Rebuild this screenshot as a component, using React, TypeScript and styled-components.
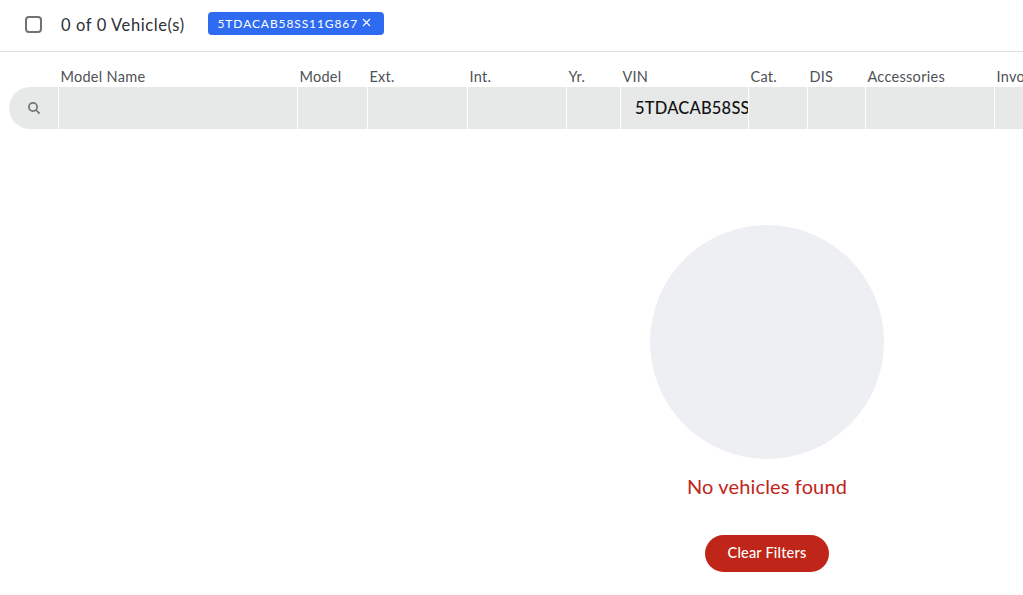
import React from "react";
import styled, { createGlobalStyle } from "styled-components";

const Global = createGlobalStyle`
  html, body { margin: 0; padding: 0; background: #fff; overflow: hidden; }
  body { font-family: Lato, "Open Sans", sans-serif; }
`;

const Page = styled.div`
  width: 1023px;
  height: 595px;
  overflow: hidden;
  position: relative;
`;

const TopBar = styled.div`
  height: 52px;
  box-sizing: border-box;
  border-bottom: 1px solid #dcdddd;
  display: flex;
  align-items: center;
  padding-left: 25px;
  padding-bottom: 1px;
`;

const Check = styled.span`
  width: 13px;
  height: 13px;
  border: 2px solid #6f7277;
  border-radius: 4px;
  display: block;
  flex: none;
  margin-bottom: 1px;
`;

const Count = styled.span`
  margin-left: 19px;
  font-size: 16.5px;
  letter-spacing: 0.6px;
  color: #2c2f34;
  width: 147px;
  flex: none;
  white-space: nowrap;
`;

const Chip = styled.span`
  height: 23px;
  width: 176px;
  margin-bottom: 3px;
  box-sizing: border-box;
  padding-left: 9.5px;
  background: #2f6bf0;
  border-radius: 4px;
  color: #fff;
  font-size: 12px;
  letter-spacing: 0.9px;
  display: flex;
  align-items: center;
  gap: 3.5px;
  white-space: nowrap;
`;

const ChipClose = styled.svg`
  margin-bottom: 2px;
`;

const Wide = styled.div`
  width: 1534px;
`;

const HeadRow = styled.div`
  display: flex;
  height: 35px;
  align-items: flex-end;
  box-sizing: border-box;
  padding: 0 0 1px 9px;
  gap: 1px;
`;

const HeadCell = styled.div<{ $w: number }>`
  width: ${(p) => p.$w}px;
  flex: none;
  box-sizing: border-box;
  padding-left: 1.4px;
  font-size: 14.5px;
  letter-spacing: 0.3px;
  line-height: 20px;
  height: 19px;
  color: #4e5156;
  white-space: nowrap;
  overflow: hidden;
`;

const FilterRow = styled.div`
  display: flex;
  height: 42px;
  margin-left: 9px;
  gap: 1px;
`;

const FilterCell = styled.div<{ $w: number; $first?: boolean }>`
  width: ${(p) => p.$w}px;
  flex: none;
  box-sizing: border-box;
  background: #e7e8e8;
  display: flex;
  align-items: center;
  overflow: hidden;
  ${(p) => (p.$first ? "border-radius: 21px 0 0 21px; justify-content: center; padding-left: 1px;" : "")}
`;

const VinInput = styled.input`
  width: 100%;
  height: 100%;
  box-sizing: border-box;
  border: none;
  outline: none;
  background: transparent;
  padding: 0 0 0 14px;
  font-family: inherit;
  font-size: 16.5px;
  letter-spacing: 0.2px;
  font-weight: 500;
  color: #111;
`;

const Empty = styled.div`
  display: flex;
  flex-direction: column;
  align-items: center;
  padding-top: 96px;
`;

const Circle = styled.div`
  width: 234px;
  height: 234px;
  border-radius: 50%;
  background: #eeeff2;
`;

const Message = styled.div`
  margin-top: 15px;
  font-size: 20px;
  letter-spacing: 0.15px;
  line-height: 24px;
  color: #c0251b;
`;

const ClearButton = styled.button`
  margin-top: 37px;
  width: 124px;
  height: 37px;
  border: none;
  border-radius: 19px;
  background: #bf2518;
  color: #fff;
  font-family: inherit;
  font-size: 14.5px;
  letter-spacing: 0.2px;
  font-weight: 500;
  padding: 0 0 2px;
`;

const cols: [string, number][] = [
  ["Model Name", 238],
  ["Model", 69],
  ["Ext.", 99],
  ["Int.", 98],
  ["Yr.", 53],
  ["VIN", 127],
  ["Cat.", 58],
  ["DIS", 57],
  ["Accessories", 128],
  ["Invoice", 120],
];

export default function App() {
  return (
    <Page>
      <Global />
      <TopBar>
        <Check />
        <Count>0 of 0 Vehicle(s)</Count>
        <Chip>
          5TDACAB58SS11G867
          <ChipClose width="9" height="9" viewBox="0 0 9 9" fill="none" stroke="#fff" strokeWidth="1.1">
            <path d="M1 1l7 7M8 1l-7 7" />
          </ChipClose>
        </Chip>
      </TopBar>
      <Wide>
        <HeadRow>
          <HeadCell $w={49} />
          {cols.map(([label, w]) => (
            <HeadCell key={label} $w={w}>{label}</HeadCell>
          ))}
        </HeadRow>
        <FilterRow>
          <FilterCell $w={49} $first>
            <svg width="14" height="14" viewBox="0 0 14 14" fill="none" stroke="#6f7277" strokeWidth="1.7">
              <circle cx="6" cy="6" r="4.1" />
              <path d="M9 9l3.6 3.6" />
            </svg>
          </FilterCell>
          {cols.map(([label, w]) => (
            <FilterCell key={label} $w={w}>
              {label === "VIN" ? <VinInput readOnly value="5TDACAB58SS11G867" /> : null}
            </FilterCell>
          ))}
        </FilterRow>
        <Empty>
          <Circle />
          <Message>No vehicles found</Message>
          <ClearButton>Clear Filters</ClearButton>
        </Empty>
      </Wide>
    </Page>
  );
}
